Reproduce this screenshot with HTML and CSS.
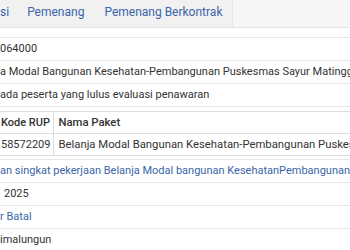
FILE: index.html
```html
<!DOCTYPE html>
<html lang="id">
<head>
<meta charset="utf-8">
<title>Pengumuman Tender</title>
<link rel="stylesheet" href="styles.css">
</head>
<body>
<div class="page">
  <nav class="tabs">
    <a class="tab tab-first" href="#">si</a>
    <a class="tab" href="#">Pemenang</a>
    <a class="tab tab-last" href="#">Pemenang Berkontrak</a>
  </nav>
  <div class="rows">
    <div class="row">064000</div>
    <div class="row">a Modal Bangunan Kesehatan-Pembangunan Puskesmas Sayur Matinggi Kabupaten Simalungun</div>
    <div class="row">ada peserta yang lulus evaluasi penawaran</div>
    <div class="row row-table">
      <table class="rup">
        <tr><th class="col-kode">Kode RUP</th><th class="col-nama">Nama Paket</th></tr>
        <tr><td class="col-kode">58572209</td><td class="col-nama">Belanja Modal Bangunan Kesehatan-Pembangunan Puskesmas Sayur Matinggi</td></tr>
      </table>
    </div>
    <div class="row"><a class="link" href="#">an singkat pekerjaan Belanja Modal bangunan KesehatanPembangunan Puskesmas Sayur Matinggi</a></div>
    <div class="row"><span class="year">2025</span></div>
    <div class="row"><a class="link" href="#">r Batal</a></div>
    <div class="row">imalungun</div>
  </div>
</div>
</body>
</html>
```
FILE: styles.css
```css
html, body {
  margin: 0;
  padding: 0;
  background: #ffffff;
}
body {
  width: 350px;
  height: 250px;
  overflow: hidden;
  font-family: Roboto, "Noto Sans", "Liberation Sans", sans-serif;
  font-size: 11px;
  color: #333333;
}
.page {
  width: 350px;
}
.tabs {
  display: flex;
  height: 27px;
  align-items: stretch;
  background: #f6f6f6;
  border-bottom: 1px solid #e2e2e2;
}
.tab {
  display: flex;
  align-items: center;
  padding: 0 10px 3px;
  font-size: 12px;
  color: #3b66a9;
  text-decoration: none;
  white-space: nowrap;
  background: #f1f1f1;
}
.tab-first {
  padding-left: 0;
  padding-right: 8px;
}
.tab-last {
  border-right: 1px solid #e6e6e6;
}
.rows {
  margin-top: 9px;
}
.row {
  border-top: 1px solid #e6e6e6;
  padding: 5px 0;
  line-height: 12px;
  white-space: nowrap;
}
.row-table {
  padding: 4px 0 3px;
}
.rup {
  border-collapse: collapse;
  margin-left: -4px;
  white-space: nowrap;
}
.rup th, .rup td {
  border: 1px solid #dddddd;
  padding: 5px 3px 5px 4px;
  line-height: 11px;
  text-align: left;
}
.rup th {
  font-weight: 500;
  color: #333333;
}
.col-kode {
  width: 68px;
}
.col-nama {
  font-size: 11.3px;
}
.link {
  color: #3b66a9;
  text-decoration: none;
}
.year {
  padding-left: 4px;
}
```
